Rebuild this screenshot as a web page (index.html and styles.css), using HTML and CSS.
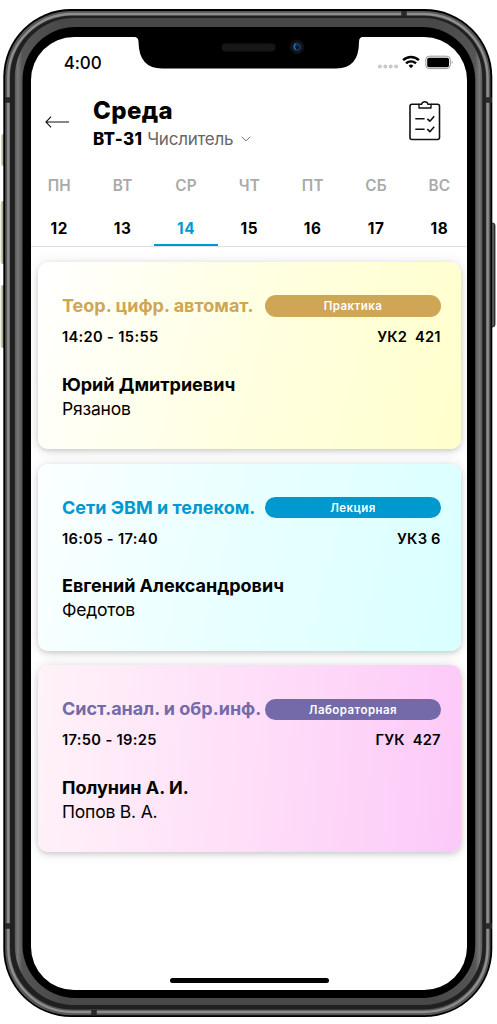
FILE: index.html
```html
<!DOCTYPE html>
<html lang="ru">
<head>
<meta charset="utf-8">
<title>Расписание</title>
<link rel="stylesheet" href="styles.css">
</head>
<body>
<div class="phone">
  <svg class="frame" width="497" height="1024" viewBox="0 0 497 1024" aria-hidden="true">
    <defs>
      <linearGradient id="side" x1="0" x2="1" y1="0" y2="0"><stop offset="0" stop-color="#555"/><stop offset=".006" stop-color="#777"/><stop offset=".016" stop-color="#555"/><stop offset=".1" stop-color="#484848"/><stop offset=".9" stop-color="#484848"/><stop offset=".984" stop-color="#555"/><stop offset=".994" stop-color="#777"/><stop offset="1" stop-color="#555"/></linearGradient>
      <linearGradient id="btn" x1="0" x2="1" y1="0" y2="0"><stop offset="0" stop-color="#bbb"/><stop offset="1" stop-color="#333"/></linearGradient>
      <linearGradient id="key" x1="0" x2="1" y1="0" y2="0"><stop offset="0" stop-color="#e2e2bd"/><stop offset=".5" stop-color="#a5a598"/><stop offset="1" stop-color="#333"/></linearGradient>
    </defs>
    <rect x="1" y="134" width="5" height="32" rx="2.5" fill="url(#key)"/>
    <rect x=".5" y="201" width="5" height="63" rx="2.5" fill="url(#key)"/>
    <rect x=".5" y="285" width="5" height="63" rx="2.5" fill="url(#key)"/>
    <rect x="490" y="223" width="5" height="104" rx="2.5" fill="url(#btn)" stroke="#000" stroke-width=".7"/>
    <rect x="3.3" y="9" width="489" height="1008" rx="68" fill="#000"/>
    <rect x="5.2" y="11" width="485.2" height="1004.3" rx="66" fill="#555"/>
    <rect x="8.3" y="14" width="479.3" height="998" rx="64" fill="none" stroke="#8e8e8e" stroke-width="2.4"/>
    <rect x="10" y="15.8" width="475.9" height="993.7" rx="62" fill="#202020"/>
    <rect x="14.8" y="18" width="467.5" height="987" rx="59" fill="url(#side)"/>
    <rect x="22.5" y="27" width="452.7" height="971" rx="53" fill="#000"/>
    <path d="M5 100h5M486 100h6M5 926h5M486 926h6M94 1010v5.5M404 11v5" stroke="#292929" stroke-width="5.5"/>
  </svg>
  <main class="screen">
    <div class="status">
      <span class="clock">4:00</span>
      <svg class="signals" width="77" height="16" viewBox="0 0 77 16">
        <g fill="#c9c9c9"><circle cx="2.9" cy="12.6" r="2"/><circle cx="8.3" cy="12.6" r="2"/><circle cx="13.7" cy="12.6" r="2"/><circle cx="19.1" cy="12.6" r="2"/></g>
        <g fill="none" stroke="#000" stroke-width="2.4"><path d="M26.1 6.2a11.2 11.2 0 0 1 15.8 0"/><path d="M29 9.4a7.1 7.1 0 0 1 10 0"/></g>
        <path d="M34 14.3l-2.4-2.5a3.4 3.4 0 0 1 4.8 0z"/>
        <rect x="48.8" y="2.2" width="24.5" height="12.4" rx="3.4" fill="none" stroke="#999"/>
        <rect x="50.2" y="3.7" width="21.8" height="9.5" rx="1.8"/>
        <path d="M74.7 6.5q2 1.8 0 3.8z" fill="#999"/>
      </svg>
    </div>
    <header class="header">
      <svg class="back" width="25" height="14" viewBox="0 0 25 14" fill="none" stroke="#111" stroke-width="1.1"><path d="M24 7H1M6.1 1.7L.9 7l5.2 5.3"/></svg>
      <div class="heading">
        <h1 class="title">Среда</h1>
        <div class="sub"><b class="group">ВТ-31</b><span class="week">Числитель</span><svg width="10" height="6" viewBox="0 0 10 6" fill="none" stroke="#777"><path d="M.7.8L5 4.8 9.3.8"/></svg></div>
      </div>
      <svg class="tasks" width="32" height="40" viewBox="0 0 32 40" fill="none" stroke="#111" stroke-width="1.6" stroke-linejoin="round">
        <path d="M10 3.3H3Q1 3.3 1 5.3V36.5q0 2 2 2H28.5q2 0 2-2V5.3q0-2-2-2H22"/>
        <path d="M10 3.3h2.6a3.3 3.3 0 0 1 6.4 0H22V7H10z" stroke-width="1.4"/>
        <path d="M6.3 17.8h9.3M6.3 28.2h9.3M18.3 17.8l2.6 2.4 4.3-5M18.3 28.2l2.6 2.5 4.3-5"/>
      </svg>
    </header>
    <nav class="days">
      <div class="day"><span class="name">ПН</span><span class="date">12</span></div>
      <div class="day"><span class="name">ВТ</span><span class="date">13</span></div>
      <div class="day active"><span class="name">СР</span><span class="date">14</span></div>
      <div class="day"><span class="name">ЧТ</span><span class="date">15</span></div>
      <div class="day"><span class="name">ПТ</span><span class="date">16</span></div>
      <div class="day"><span class="name">СБ</span><span class="date">17</span></div>
      <div class="day"><span class="name">ВС</span><span class="date">18</span></div>
    </nav>
    <div class="list">
      <article class="card practice">
        <div class="row"><h2 class="subject">Теор. цифр. автомат.</h2><span class="kind">Практика</span></div>
        <div class="row info"><span class="time">14:20 - 15:55</span><span class="room">УК2&nbsp; 421</span></div>
        <div class="teacher">Юрий Дмитриевич</div>
        <div class="surname">Рязанов</div>
      </article>
      <article class="card lecture">
        <div class="row"><h2 class="subject">Сети ЭВМ и телеком.</h2><span class="kind">Лекция</span></div>
        <div class="row info"><span class="time">16:05 - 17:40</span><span class="room">УК3 6</span></div>
        <div class="teacher">Евгений Александрович</div>
        <div class="surname">Федотов</div>
      </article>
      <article class="card lab">
        <div class="row"><h2 class="subject">Сист.анал. и обр.инф.</h2><span class="kind">Лабораторная</span></div>
        <div class="row info"><span class="time">17:50 - 19:25</span><span class="room">ГУК&nbsp; 427</span></div>
        <div class="teacher">Полунин А. И.</div>
        <div class="surname">Попов В. А.</div>
      </article>
    </div>
    <div class="home"></div>
  </main>
  <svg class="notch" width="222" height="34" viewBox="0 0 222 34" aria-hidden="true">
    <path d="M-3 0V.8Q1.500 1 1.500 6Q2 32.500 25 32.500H199Q222 32.500 222 6Q222 1 226 .8V0z"/>
    <rect x="84.500" y="7.500" width="54" height="8" rx="4" fill="#161616"/>
    <circle cx="160" cy="11" r="7" fill="#121212"/><circle cx="160" cy="11" r="4.200" fill="#103260"/><path d="M159 7.500a3.500 3.500 0 0 0 0 6" stroke="#286cb4" fill="none" stroke-width="1.300"/><circle cx="160.300" cy="11.500" r="1.700" fill="#07111f"/>
  </svg>
</div>
</body>
</html>
```
FILE: styles.css
```css
* { box-sizing: border-box; }
body { margin: 0; background: #fff; color: #000; font-family: Inter, "Liberation Sans", sans-serif; }
.phone { position: relative; width: 497px; height: 1024px; padding: 36.5px 30.5px 34px 30.7px; overflow: hidden; }
.frame { position: absolute; left: 0; top: 0; }
.screen { position: relative; height: 953.5px; display: flex; flex-direction: column; background: #fff; border-radius: 43px; overflow: hidden; }
.notch { position: absolute; left: 137px; top: 36px; overflow: visible; }

.status { height: 50px; padding: 16px 12.3px 0 33px; display: flex; justify-content: space-between; align-items: flex-start; }
.clock { font-size: 17px; line-height: 20px; font-weight: 550; letter-spacing: -.1px; }
.signals { margin-top: 1px; }

.header { height: 77px; padding: 0 25.8px 0 14.3px; display: flex; align-items: flex-start; }
.back { margin-top: 28px; }
.heading { flex: 1; padding: 9px 0 0 23px; }
.title { margin: 0; font-size: 24px; line-height: 30px; font-weight: 800; letter-spacing: .4px; }
.sub { display: flex; align-items: center; height: 25px; margin-top: 1px; font-size: 17px; }
.group { font-weight: 800; letter-spacing: .3px; }
.week { margin: 0 7.500px 0 5px; color: #666; font-weight: 400; letter-spacing: -.25px; }
.tasks { margin-top: 14.5px; }

.days { display: grid; grid-template-columns: repeat(7, 63.35px); height: 83.5px; margin-left: -3px; flex: none; border-bottom: 1px solid #e0e0e0; }
.day { display: flex; flex-direction: column; align-items: center; border-bottom: 2px solid transparent; padding-top: 12px; }
.name { font-size: 15.3px; line-height: 20px; font-weight: 600; letter-spacing: .3px; color: #aaa; }
.date { margin-top: 23px; font-size: 15.3px; line-height: 20px; font-weight: 650; letter-spacing: .7px; }
.active { border-color: #0099cf; }
.active .date { color: #0099cf; }

.list { display: flex; flex-direction: column; gap: 14.7px; padding: 15px 5.3px 0 7.3px; flex: 1; }
.card { height: 187px; padding: 33px 20.5px 0 24px; border-radius: 10px; box-shadow: 0 1px 14px rgba(0, 0, 0, .11), 0 2px 5px rgba(0, 0, 0, .15); }
.practice { background: linear-gradient(105deg, #fff, #ffffe2 48%, #ffc); color: #cfa556; }
.lecture { background: linear-gradient(105deg, #fbffff, #e8ffff 48%, #d9ffff); color: #0099cf; }
.lab { background: linear-gradient(95deg, #fff2f8, #fedff8 48%, #fcc9f8); color: #746aaa; }
.row { display: flex; justify-content: space-between; align-items: center; }
.subject { margin: 0; font-size: 18px; line-height: 22px; font-weight: 700; white-space: nowrap; }
.kind { flex: none; width: 175.5px; height: 21.5px; border-radius: 11px; color: #fff; font-size: 11.5px; line-height: 22px; font-weight: 600; letter-spacing: .45px; text-align: center; }
.practice .kind { background: #cfa556; }
.lecture .kind { background: #0099cf; }
.lab .kind { background: #746aaa; }
.info { height: 20px; margin-top: 10px; color: #000; font-size: 14.7px; font-weight: 600; }
.time { letter-spacing: .32px; }
.room { letter-spacing: .2px; }
.teacher { margin-top: 25.5px; color: #000; font-size: 18px; line-height: 24px; font-weight: 700; }
.surname { color: #000; font-size: 17.5px; line-height: 24px; font-weight: 400; letter-spacing: -.2px; }
.home { flex: none; align-self: center; width: 159px; height: 5px; margin: 0 0 7.5px 1px; border-radius: 3px; background: #000; }
```
